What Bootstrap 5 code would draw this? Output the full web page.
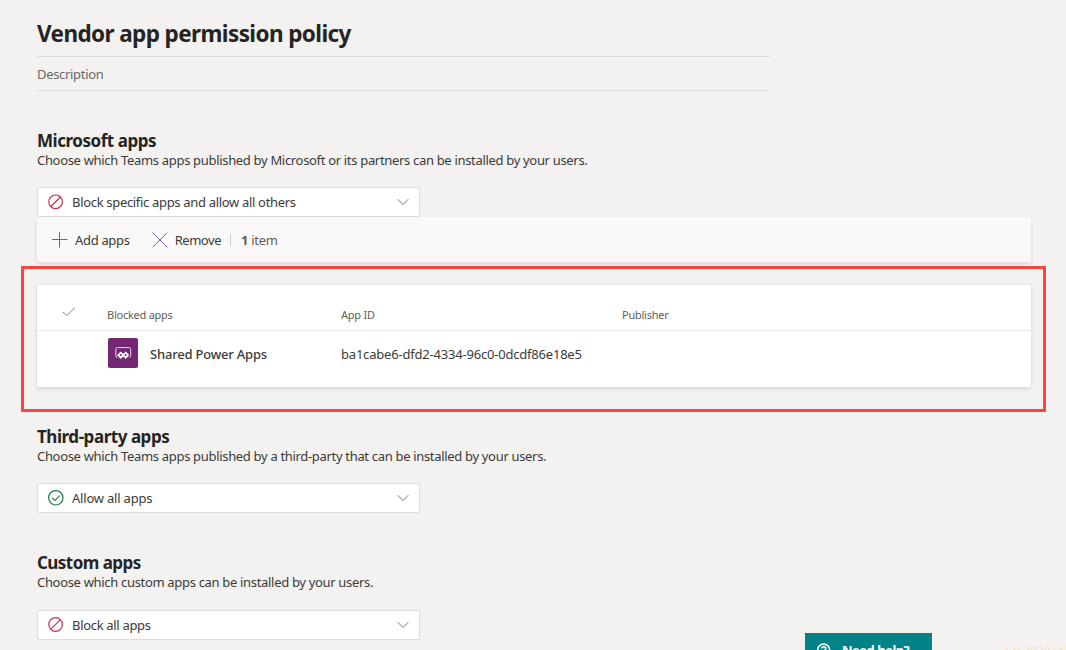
<!DOCTYPE html>
<html lang="en">
<head>
<meta charset="utf-8">
<meta name="viewport" content="width=device-width, initial-scale=1">
<title>Vendor app permission policy</title>
<link href="https://cdn.jsdelivr.net/npm/bootstrap@5.3.0/dist/css/bootstrap.min.css" rel="stylesheet">
<style>
html, body { height: 650px; overflow: hidden; }
body { background: #f3f2f1; color: #3b3a39; font-family: "Noto Sans", "Open Sans", sans-serif; font-size: 13px; line-height: 20px; letter-spacing: -.32px; white-space: nowrap; }
svg { display: block; flex: none; }
.page { padding: 10px 35px 0 37px; height: 650px; overflow: hidden; }
.policy-head { width: 733px; }
.policy-title { height: 46px; line-height: 48px; font-size: 22.5px; font-weight: 700; letter-spacing: -.6px; color: #252423; }
.policy-desc { height: 35px; line-height: 35px; border-top: 1px solid #dcdbda; border-bottom: 1px solid #dcdbda; color: #6b6967; }
.group-title { height: 20px; font-size: 17px; line-height: 20px; font-weight: 700; letter-spacing: -.46px; color: #252423; }
.group-text { height: 20px; line-height: 18px; color: #3b3a39; }
.picker { width: 383px; height: 30px; margin-top: 16px; padding: 0 10px; background: #fff; border: 1px solid #dcdcdc; border-radius: 2px; }
.picker .picker-text { margin-left: 8px; }
.tools { height: 45px; padding-left: 15px; background: #faf9f8; border-radius: 2px; box-shadow: 0 2px 4px rgba(0,0,0,.1); }
.tools .divider { width: 1px; height: 12px; background: #d2d0ce; }
.highlight { height: 146px; margin: 4px -15px 0 -16px; padding: 16px 12px 0 13px; border: 3px solid #ff4343; }
.apps-card { height: 102px; background: #fff; border-radius: 2px; box-shadow: 0 1.5px 4px rgba(0,0,0,.13); }
.apps-row { display: grid; grid-template-columns: 70px 234px 281px 1fr; }
.apps-head { height: 46px; padding-top: 20px; border-bottom: 1px solid #eaeaea; font-size: 11px; letter-spacing: -.25px; color: #605e5c; }
.apps-body { height: 46px; align-items: center; }
.app-tile { width: 30px; height: 30px; border-radius: 2px; background: #742774; margin: 0 0 2px 1px; }
.help { left: 805px; top: 633px; width: 127px; height: 34px; padding-left: 12px; background: #038387; color: #fff; font-weight: 700; letter-spacing: -.5px; }
.build { left: 1003px; top: 645px; font: 11px/14px "DejaVu Sans", sans-serif; letter-spacing: -.2px; color: #f9dfb4; }
</style>
</head>
<body>
<main class="page">
  <header class="policy-head">
    <h1 class="policy-title m-0">Vendor app permission policy</h1>
    <div class="policy-desc">Description</div>
  </header>

  <section style="margin-top:40px">
    <h2 class="group-title m-0">Microsoft apps</h2>
    <p class="group-text m-0">Choose which Teams apps published by Microsoft or its partners can be installed by your users.</p>
    <div class="picker d-flex align-items-center">
      <svg width="16" height="16" fill="none" stroke="#c4314b" stroke-width="1.2"><circle cx="7.6" cy="7.8" r="6.8"/><path d="M2.9 12.500l9.500-9.500"/></svg>
      <span class="picker-text">Block specific apps and allow all others</span>
      <svg class="ms-auto" width="12" height="8" fill="none" stroke="#797775"><path d="M.7 1.200L6 6.500l5.300-5.300"/></svg>
    </div>
    <div class="tools d-flex align-items-center">
      <svg width="16" height="16" fill="none" stroke="#6264a7"><path d="M0 7.500h15.500M7.500 0v15.500"/></svg>
      <span style="margin-left:7px;letter-spacing:-.32px">Add apps</span>
      <svg style="margin-left:22px" width="16" height="16" fill="none" stroke="#6264a7"><path d="M.7.700l14.400 14.400M15.100.700L.7 15.100"/></svg>
      <span style="margin-left:7px;letter-spacing:-.45px">Remove</span>
      <span class="divider" style="margin-left:9px"></span>
      <span style="margin-left:10px;color:#605e5c"><b>1</b> item</span>
    </div>
    <div class="highlight">
      <div class="apps-card">
        <div class="apps-row apps-head">
          <svg style="margin:1px 0 0 25px" width="14" height="11" fill="none" stroke="#8a8886"><path d="M1 6l3.700 3.500L13 1.500"/></svg>
          <span>Blocked apps</span><span>App ID</span><span>Publisher</span>
        </div>
        <div class="apps-row apps-body">
          <span></span>
          <span class="d-flex align-items-center">
            <span class="app-tile"><svg width="30" height="30" fill="none" stroke="#e9d9e9"><path d="M9.200 19.500c-1-.1-1.400-.6-1.400-1.700v-6.500c0-1.200.5-1.700 1.700-1.700h11.500c1.200 0 1.700.5 1.700 1.700v6.500c0 1.100-.4 1.600-1.400 1.700"/><g stroke="#fff" stroke-width="1.700"><path d="M12.700 14.700l2.500 2.500-2.500 2.500-2.500-2.500z"/><path d="M17.600 14.700l2.500 2.500-2.500 2.500-2.500-2.500z"/></g></svg></span>
            <span style="margin-left:12px;font-weight:500;letter-spacing:-.2px">Shared Power Apps</span>
          </span>
          <span style="letter-spacing:-.2px">ba1cabe6-dfd2-4334-96c0-0dcdf86e18e5</span>
          <span></span>
        </div>
      </div>
    </div>
  </section>

  <section style="margin-top:15px">
    <h2 class="group-title m-0">Third-party apps</h2>
    <p class="group-text m-0">Choose which Teams apps published by a third-party that can be installed by your users.</p>
    <div class="picker d-flex align-items-center">
      <svg width="16" height="16" fill="none" stroke="#237b4b" stroke-width="1.200"><circle cx="7.800" cy="7.800" r="7.200"/><path d="M4.300 7.800l2.700 2.700 4.700-4.800"/></svg>
      <span class="picker-text" style="letter-spacing:-.2px">Allow all apps</span>
      <svg class="ms-auto" width="12" height="8" fill="none" stroke="#797775"><path d="M.7 1.200L6 6.500l5.300-5.300"/></svg>
    </div>
  </section>

  <section style="margin-top:40px">
    <h2 class="group-title m-0" style="letter-spacing:-.55px">Custom apps</h2>
    <p class="group-text m-0">Choose which custom apps can be installed by your users.</p>
    <div class="picker d-flex align-items-center" style="margin-top:17px">
      <svg width="16" height="16" fill="none" stroke="#c4314b" stroke-width="1.200"><circle cx="7.600" cy="7.500" r="6.800"/><path d="M2.900 12.200l9.500-9.500"/></svg>
      <span class="picker-text">Block all apps</span>
      <svg class="ms-auto" width="12" height="8" fill="none" stroke="#797775"><path d="M.7 1.200L6 6.500l5.300-5.300"/></svg>
    </div>
  </section>
</main>

<div class="help position-fixed d-flex align-items-center">
  <svg width="14" height="14" fill="none" stroke="#fff" stroke-width="1.600"><circle cx="6.700" cy="7" r="6"/><path d="M4.700 5.600c0-2.600 4.200-2.500 4.200 0 0 1.400-2.100 1.400-2.100 3M6.800 9.700v1.300"/></svg>
  <span style="margin-left:11px">Need help?</span>
</div>
<div class="build position-fixed">1.0.2020141</div>
<script src="https://cdn.jsdelivr.net/npm/bootstrap@5.3.0/dist/js/bootstrap.bundle.min.js"></script>
</body>
</html>
